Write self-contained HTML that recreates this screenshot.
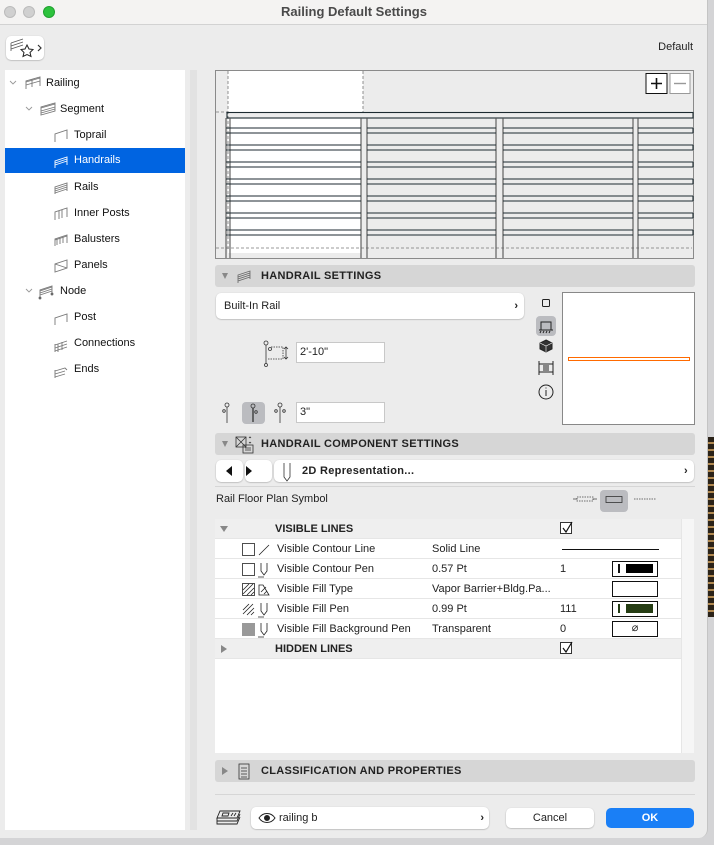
<!DOCTYPE html>
<html><head><meta charset="utf-8">
<style>
*{box-sizing:border-box;margin:0;padding:0}
body{width:714px;height:845px;overflow:hidden;background:#d4d4d6;font-family:"Liberation Sans",sans-serif;font-size:11px;color:#222;position:relative}
.a{position:absolute}
#win{left:0;top:0;width:708px;height:838px;background:#ececec;border-radius:0 0 9px 0;overflow:hidden;border-right:1px solid #c4c4c4}
.title{left:0;top:0;width:708px;height:25px;background:#f4f3f2;border-bottom:1px solid #d2d2d2;text-align:center;line-height:23px;font-weight:bold;font-size:13px;color:#4a4a4a}
.dot{top:6px;width:12px;height:12px;border-radius:50%}
.tree{left:5px;top:70px;width:180px;height:760px;background:#fff}
.ti{position:absolute;font-size:11px;color:#111;height:26px;line-height:26px}
.sel{left:5px;top:148px;width:180px;height:25px;background:#0064e1}
.hdr{background:#d6d6d6;border-radius:3px;font-weight:bold;font-size:11px;letter-spacing:.3px;line-height:22px;color:#222}
.btn{background:#fff;border-radius:5px;box-shadow:0 0.5px 1.5px rgba(0,0,0,.3)}
.inp{background:#fff;border:1px solid #c8c8c8;font-size:11px;line-height:19px;padding-left:3px}
.row{position:absolute;left:215px;width:466px;height:20px;background:#fff;border-bottom:1px solid #e6e6e6;line-height:21px;font-size:11px}
.row span{position:absolute}
.sw{position:absolute;left:397px;top:2px;width:46px;height:16px;border:1.3px solid #111;background:#fff}
.cb{position:absolute;width:12px;height:12px;border:1px solid #333;background:#fff}
</style></head><body>
<div class="a" style="left:708px;top:437px;width:6px;height:180px;background:repeating-linear-gradient(180deg,#2a2218 0 5px,#b08850 5px 7px)"></div>
<div class="a" id="win">
<div class="a title">Railing Default Settings</div>
<div class="a dot" style="left:4px;background:#d0d0d0;border:0.5px solid #bbb"></div>
<div class="a dot" style="left:23px;background:#d0d0d0;border:0.5px solid #bbb"></div>
<div class="a dot" style="left:43px;background:#2dc23d;border:0.5px solid #20a030"></div>

<div class="a btn" style="left:6px;top:36px;width:38px;height:24px"></div>
<svg class="a" style="left:9px;top:38px" width="36" height="22"><path d="M2 5l12-4M2 8l12-4M2 11l12-4M2 5v8" stroke="#555" fill="none" stroke-width=".8"/><path d="M18 7l2 4 4 .5-3 3 1 4-4-2-4 2 1-4-3-3 4-.5z" stroke="#222" fill="#fff" stroke-width="1"/><path d="M29 7l3 3-3 3" stroke="#333" fill="none" stroke-width="1.2"/></svg>
<div class="a" style="right:14px;top:41px;font-size:11px">Default</div>

<div class="a tree"></div>
<div class="a" style="left:190px;top:70px;width:7px;height:760px;background:#e2e2e2"></div>
<div class="a sel"></div>
<svg class="a" style="left:0;top:70px" width="185" height="320" fill="none" stroke="#777" stroke-width=".9">
<path d="M10 11l3 3 3-3M26 37l3 3 3-3M26 219l3 3 3-3" stroke="#999"/>
<path d="M26 19v-8l14-4v9M32 17v-8M26 12l14-4M26 15l14-4"/>
<path d="M41 45l14-4v-8l-14 4zM41 38l14-4M41 41l14-4M41 43l14-4"/>
<path d="M55 72v-8l12-4v9"/>
<path d="M55 98v-7l12-4v8M55 91l12-4M55 93l12-4M55 95l12-4" stroke="#fff"/>
<path d="M55 124v-7l12-4v8M55 117l12-4M55 119l12-4M55 121l12-4M55 123l12-4"/>
<path d="M55 150v-8l12-4v9M59 149v-8M62 148v-8"/>
<path d="M55 176v-7l12-4v8M55 170l12-4M57 175v-6M60 174v-6M63 173v-6"/>
<path d="M55 202v-8l12-4v8zM55 194l12 4"/>
<path d="M40 228v-8l12-4v8M40 221l12-4M40 223l12-4M40 225l12-4" /><circle cx="40" cy="228" r="1" fill="#333"/><circle cx="52" cy="224" r="1" fill="#333"/>
<path d="M55 255v-7l12-4v8"/>
<path d="M55 282v-8M58 282v-8M55 275l12-4M55 278l12-4M55 281l12-4M62 280v-8"/>
<path d="M55 308v-8M55 301l10-3 2 2M55 304l10-3M55 307l10-3"/>
</svg>
<div class="ti" style="left:46px;top:70px">Railing</div>
<div class="ti" style="left:60px;top:96px">Segment</div>
<div class="ti" style="left:74px;top:122px">Toprail</div>
<div class="ti" style="left:74px;top:148px;color:#fff;height:25px;line-height:25px">Handrails</div>
<div class="ti" style="left:74px;top:174px">Rails</div>
<div class="ti" style="left:74px;top:200px">Inner Posts</div>
<div class="ti" style="left:74px;top:226px">Balusters</div>
<div class="ti" style="left:74px;top:252px">Panels</div>
<div class="ti" style="left:60px;top:278px">Node</div>
<div class="ti" style="left:74px;top:304px">Post</div>
<div class="ti" style="left:74px;top:330px">Connections</div>
<div class="ti" style="left:74px;top:356px">Ends</div>

<svg class="a" style="left:215px;top:70px" width="480" height="190">
<rect x="0.5" y="0.5" width="478" height="188" fill="#ececec" stroke="#8a8a8a"/>
<rect x="13" y="1" width="135" height="41" fill="#fff"/>
<rect x="13" y="48" width="133" height="135" fill="#fff"/>
<g stroke="#777" stroke-dasharray="3 2" stroke-width=".8" fill="none"><path d="M13 1v180M148 1v41M1 42h12M1 178h476"/></g>
<g stroke="#1c2a30" stroke-width="1.1" fill="none">
<rect x="12" y="42.5" width="466" height="5.5"/>
<path d="M11 48v140M15 48v140M146 48v140M152 48v140M281 48v140M288 48v140M418 48v140M423 48v140" stroke="#555"/>
<g id="r"><path d="M11 58h135M11 63h135M152 58h129M152 63h129M288 58h130M288 63h130M423 58h55M423 63h55"/></g>
<use href="#r" y="17"/><use href="#r" y="34"/><use href="#r" y="51"/><use href="#r" y="68"/><use href="#r" y="85"/><use href="#r" y="102"/>
<path d="M478 58v5M478 75v5M478 92v5M478 109v5M478 126v5M478 143v5M478 160v5"/>
</g>
<rect x="431" y="3.5" width="21" height="20" fill="#fff" stroke="#111"/><path d="M436 13.5h11M441.5 8v11" stroke="#111" stroke-width="1.6"/>
<rect x="455" y="3.5" width="20" height="20" fill="#fff" stroke="#999"/><path d="M459 13.5h12" stroke="#999" stroke-width="1.4"/>
</svg>

<div class="a hdr" style="left:215px;top:265px;width:480px;height:22px;padding-left:46px">HANDRAIL SETTINGS</div>
<svg class="a" style="left:220px;top:268px" width="36" height="18"><path d="M2 5l3 6 3-6z" fill="#888"/><path d="M18 15v-8l12-4v8M18 9l12-4M18 11l12-4M18 13l12-4" stroke="#666" fill="none" stroke-width=".8"/></svg>

<div class="a btn" style="left:216px;top:293px;width:308px;height:26px;line-height:26px;padding-left:8px">Built-In Rail<span style="position:absolute;right:6px;font-weight:bold">›</span></div>
<svg class="a" style="left:534px;top:292px" width="26" height="112" fill="none" stroke="#222" stroke-width="1">
<rect x="8.5" y="7.5" width="7" height="7" rx="1"/>
<rect x="2" y="24" width="20" height="20" rx="4" fill="#bbbcc0" stroke="none"/>
<path d="M7 38v-8h10v8M5 38h14M6 41l1-2M9 41l1-2M12 41l1-2M15 41l1-2"/>
<path d="M12 48l6 3v6l-6 3-6-3v-6z" fill="#333"/><path d="M6 51l6 3 6-3M12 54v6" stroke="#fff" stroke-width=".6"/>
<path d="M5 69v14M19 69v14M5 72h14M5 80h14M9 74h6M9 76h6M9 78h6"/>
<circle cx="12" cy="100" r="7"/><path d="M12 98v6M12 95.5v1"/>
</svg>
<div class="a" style="left:562px;top:292px;width:133px;height:133px;background:#fff;border:1px solid #888"></div>
<div class="a" style="left:568px;top:357px;width:122px;height:4px;border:1px solid #ff6a00"></div>

<svg class="a" style="left:260px;top:340px" width="36" height="28" fill="none" stroke="#333" stroke-width=".8"><circle cx="6" cy="3" r="2"/><path d="M6 5v19"/><circle cx="10" cy="9" r="1.5"/><path d="M11 7h12v12H8" stroke-dasharray="1.5 1"/><path d="M26 7v12M24 9l2-2 2 2M24 17l2 2 2-2"/><circle cx="6" cy="25" r="1.5"/></svg>
<div class="a inp" style="left:296px;top:342px;width:89px;height:21px">2'-10"</div>

<svg class="a" style="left:217px;top:401px" width="78" height="24" fill="none" stroke="#333" stroke-width=".8">
<circle cx="10" cy="4" r="2"/><path d="M10 6v16"/><circle cx="7" cy="10" r="1.3"/>
<rect x="25" y="1" width="23" height="22" rx="4" fill="#bbbcc0" stroke="none"/>
<circle cx="36" cy="5" r="2"/><path d="M36 7v14" stroke-width="1.3"/><circle cx="39" cy="11" r="1.3"/>
<circle cx="63" cy="4" r="2"/><path d="M63 6v16"/><circle cx="59" cy="10" r="1.3"/><circle cx="67" cy="10" r="1.3"/>
</svg>
<div class="a inp" style="left:296px;top:402px;width:89px;height:21px">3"</div>

<div class="a hdr" style="left:215px;top:433px;width:480px;height:22px;padding-left:46px">HANDRAIL COMPONENT SETTINGS</div>
<svg class="a" style="left:220px;top:435px" width="36" height="20" fill="none" stroke="#333" stroke-width=".8"><path d="M2 6l3 6 3-6z" fill="#888" stroke="none"/><rect x="16" y="2" width="10" height="10"/><path d="M16 2l10 10M26 2l-10 10"/><rect x="23" y="10" width="10" height="8"/><path d="M25 13h6M25 15h6M29 3l1-1 1 1M29 7l1 1 1-1"/></svg>

<div class="a btn" style="left:216px;top:460px;width:27px;height:22px"></div>
<div class="a btn" style="left:245px;top:460px;width:27px;height:22px"></div>
<svg class="a" style="left:216px;top:460px" width="60" height="22"><path d="M16 6l-6 5 6 5z M30 6l6 5-6 5z" fill="#111"/></svg>
<div class="a btn" style="left:274px;top:460px;width:420px;height:22px;line-height:22px;padding-left:28px;font-weight:bold;letter-spacing:.3px">2D Representation...<span style="position:absolute;right:6px">›</span></div>
<svg class="a" style="left:280px;top:461px" width="14" height="22" fill="none" stroke="#333" stroke-width=".8"><path d="M4 2v14l3 4 3-4V2"/></svg>
<div class="a" style="left:215px;top:486px;width:480px;height:1px;background:#d6d6d6"></div>
<div class="a" style="left:216px;top:493px">Rail Floor Plan Symbol</div>
<svg class="a" style="left:572px;top:489px" width="88" height="24" fill="none" stroke="#444" stroke-width=".8"><path d="M1 10h4M21 10h4"/><rect x="5" y="8" width="16" height="4" stroke-dasharray="1.5 1"/><rect x="28" y="1" width="28" height="22" rx="4" fill="#bbbcc0" stroke="none"/><rect x="34" y="7.5" width="16" height="6" stroke="#333"/><path d="M62 10h22" stroke-dasharray="1.5 1"/></svg>

<div class="a" style="left:215px;top:519px;width:479px;height:234px;background:#fff"></div>
<div class="a" style="left:681px;top:519px;width:13px;height:234px;background:#f6f6f6;border-left:1px solid #e6e6e6"></div>
<div class="row" style="top:519px;background:#efefef;font-weight:bold"><span style="left:60px">VISIBLE LINES</span></div>
<svg class="a" style="left:219px;top:525px" width="10" height="8"><path d="M1 1h8l-4 6z" fill="#888"/></svg>
<div class="cb" style="left:560px;top:522px"></div><svg class="a" style="left:560px;top:520px" width="14" height="14"><path d="M3 8l3 4 6-10" stroke="#111" fill="none" stroke-width="1.2"/></svg>

<div class="row" style="top:539px"><span style="left:62px">Visible Contour Line</span><span style="left:217px">Solid Line</span><span style="left:347px;top:10px;width:97px;height:1px;background:#111"></span></div>
<div class="row" style="top:559px"><span style="left:62px">Visible Contour Pen</span><span style="left:217px">0.57 Pt</span><span style="left:345px">1</span><span class="sw"><span style="position:absolute;left:5px;top:2px;width:2px;height:9px;background:#111"></span><span style="position:absolute;left:13px;top:2px;width:27px;height:9px;background:#000"></span></span></div>
<div class="row" style="top:579px"><span style="left:62px">Visible Fill Type</span><span style="left:217px">Vapor Barrier+Bldg.Pa...</span><span class="sw"></span></div>
<div class="row" style="top:599px"><span style="left:62px">Visible Fill Pen</span><span style="left:217px">0.99 Pt</span><span style="left:345px">111</span><span class="sw"><span style="position:absolute;left:5px;top:2px;width:2px;height:9px;background:#223a12"></span><span style="position:absolute;left:13px;top:2px;width:27px;height:9px;background:#263d14"></span></span></div>
<div class="row" style="top:619px"><span style="left:62px">Visible Fill Background Pen</span><span style="left:217px">Transparent</span><span style="left:345px">0</span><span class="sw" style="text-align:center;line-height:13px">⌀</span></div>
<div class="row" style="top:639px;background:#efefef;font-weight:bold"><span style="left:60px">HIDDEN LINES</span></div>
<svg class="a" style="left:220px;top:644px" width="8" height="10"><path d="M1 1v8l6-4z" fill="#888"/></svg>
<div class="cb" style="left:560px;top:642px"></div><svg class="a" style="left:560px;top:640px" width="14" height="14"><path d="M3 8l3 4 6-10" stroke="#111" fill="none" stroke-width="1.2"/></svg>

<svg class="a" style="left:240px;top:539px" width="32" height="100" fill="none" stroke="#222" stroke-width=".8">
<rect x="2.5" y="4.5" width="12" height="12"/><path d="M19 16l10-10"/>
<rect x="2.5" y="24.5" width="12" height="12"/><path d="M21 24v8l3 4 3-4v-8M18 38h6"/>
<rect x="2.5" y="44.5" width="12" height="12"/><path d="M3 51l6-6M3 55l10-10M7 56l7-7M11 56l3-3"/><path d="M19 56h10l-6-10h-4zM21 53l5-5M24 55l3-3"/>
<path d="M3 71l6-6M3 75l10-10M7 76l7-7M11 76l3-3"/><path d="M21 64v8l3 4 3-4v-8M18 78h6"/>
<rect x="2" y="84" width="13" height="13" fill="#999" stroke="none"/><path d="M21 84v8l3 4 3-4v-8M18 98h6"/>
</svg>

<div class="a hdr" style="left:215px;top:760px;width:480px;height:22px;padding-left:46px">CLASSIFICATION AND PROPERTIES</div>
<svg class="a" style="left:220px;top:762px" width="36" height="20" fill="none" stroke="#333" stroke-width=".8"><path d="M2 5v8l6-4z" fill="#888" stroke="none"/><rect x="19" y="2" width="10" height="15"/><path d="M21 6h6M21 9h6M21 12h6M21 15h6"/></svg>
<div class="a" style="left:215px;top:794px;width:480px;height:1px;background:#d6d6d6"></div>

<svg class="a" style="left:215px;top:807px" width="30" height="20" fill="none" stroke="#222" stroke-width=".9"><path d="M5 4h20l-3 7H2zM2 11v3h20l3-7M2 14v3h20l3-7M8 6h6l-1 3H7zM16 9l2-3M19 9l2-3"/></svg>
<div class="a btn" style="left:251px;top:807px;width:238px;height:22px;line-height:22px;padding-left:28px">railing b<span style="position:absolute;right:5px;font-weight:bold">›</span></div>
<svg class="a" style="left:258px;top:811px" width="20" height="14" fill="none" stroke="#222" stroke-width="1"><path d="M1 7c4-6 12-6 16 0c-4 6-12 6-16 0z"/><circle cx="9" cy="7" r="2.5" fill="#222"/></svg>
<div class="a btn" style="left:506px;top:808px;width:88px;height:20px;line-height:20px;text-align:center">Cancel</div>
<div class="a" style="left:606px;top:808px;width:88px;height:20px;line-height:20px;text-align:center;background:#1a7ff6;border-radius:5px;color:#fff;font-weight:bold">OK</div>
</div>
</body></html>
